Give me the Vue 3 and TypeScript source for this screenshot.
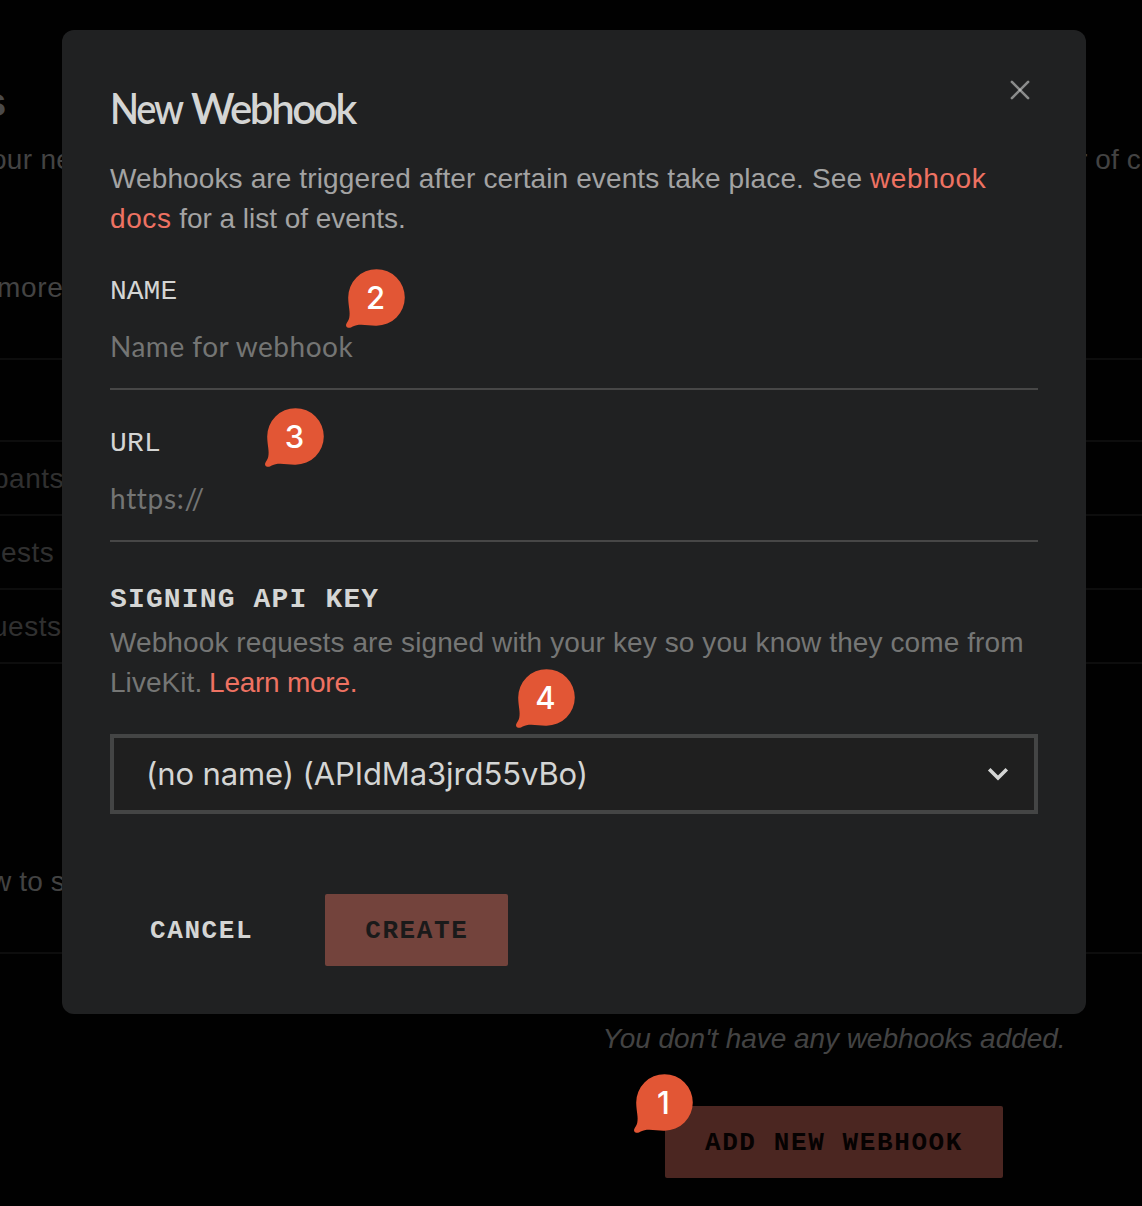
<script setup lang="ts">
interface Marker {
  label: number
  x: number
  y: number
}

const markers: Marker[] = [
  { label: 1, x: 634, y: 1074 },
  { label: 2, x: 346, y: 269 },
  { label: 3, x: 265, y: 408 },
  { label: 4, x: 516, y: 669 },
]

const bubblePath =
  'M30.5 0.2A28.3 28.3 0 0 1 58.8 28.5A28.3 28.3 0 0 1 30.5 56.7C24 56.9 16 54.8 10.5 56.3C8 57 6.6 57.6 5 58.4C1.8 59.8 -0.8 57.6 0.3 55C1.2 53 2.6 51.5 3.2 49C4.6 43 2.3 38 2.2 28.5A28.3 28.3 0 0 1 30.5 0.2Z'
</script>

<template>
  <div class="page">
    <div class="backdrop">
      <header class="intro">
        <h1 class="heading">s</h1>
        <div class="lead"><span class="our">our ne</span><span class="of">r of c</span></div>
        <div class="more">more</div>
      </header>
      <div class="row tall"></div>
      <div class="row"><span class="pants">pants</span></div>
      <div class="row"><span class="ests">ests</span></div>
      <div class="row"><span class="uests">uests</span></div>
      <div class="hooks-head"><span>w to s</span></div>
      <footer class="empty">
        <p class="none">You don't have any webhooks added.</p>
        <button class="btn add">ADD NEW WEBHOOK</button>
      </footer>
    </div>

    <section class="modal">
      <button class="close" aria-label="Close">
        <svg width="24" height="24" viewBox="0 0 24 24" fill="none" stroke="#d0d2d1" stroke-width="2.6" stroke-linecap="round">
          <path d="M3.9 3.9L20.1 20.1" stroke-opacity="0.6" />
          <path d="M20.1 3.9L3.9 20.1" stroke-opacity="0.6" />
        </svg>
      </button>
      <h2 class="title"><span class="first">New</span> <span class="second">Webhook</span></h2>
      <p class="desc">
        Webhooks are triggered after certain events take place. See <a>webhook<br />docs</a><span class="tail"> for a list of events.</span>
      </p>
      <div class="field">
        <label>NAME</label>
        <div class="input">Name for webhook</div>
      </div>
      <div class="field">
        <label class="url">URL</label>
        <div class="input scheme">https://</div>
      </div>
      <h3 class="sub">SIGNING API KEY</h3>
      <p class="desc muted">
        Webhook requests are signed with your key so you know they come from<br /><span class="tail">LiveKit. <a>Learn more.</a></span>
      </p>
      <div class="select">
        <span>(no name) (APIdMa3jrd55vBo)</span>
        <svg width="24" height="16" viewBox="0 0 24 16" fill="none" stroke="#d4d5d4" stroke-width="3.6">
          <path d="M3.2 3.3L12 12L20.8 3.3" />
        </svg>
      </div>
      <div class="actions">
        <button class="btn cancel">CANCEL</button>
        <button class="btn create">CREATE</button>
      </div>
    </section>

    <div v-for="m in markers" :key="m.label" class="marker" :style="{ left: m.x + 'px', top: m.y + 'px' }">
      <svg width="60" height="60" viewBox="0 0 60 60"><path :d="bubblePath" fill="#e25635" /></svg>
      <span>{{ m.label }}</span>
    </div>
  </div>
</template>

<style>
body {
  margin: 0;
  background: #010101;
}
</style>

<style scoped>
* {
  box-sizing: border-box;
}
h1,
h2,
h3,
p {
  margin: 0;
}
.page {
  position: relative;
  width: 1142px;
  height: 1206px;
  overflow: hidden;
  background: #010101;
  font: 400 28px/40px 'Liberation Sans', sans-serif;
  letter-spacing: 0.12px;
}
.backdrop {
  display: flex;
  flex-direction: column;
  color: #434343;
  white-space: nowrap;
}
.intro {
  height: 360px;
  padding-top: 76px;
  border-bottom: 2px solid #0d0d0d;
}
.heading {
  height: 64px;
  margin-left: -16px;
  font: 700 40px/52px 'Liberation Sans', sans-serif;
  color: #4a4a4a;
}
.lead {
  display: flex;
  justify-content: space-between;
}
.our {
  margin-left: -9px;
  letter-spacing: 0.3px;
}
.of {
  width: 64px;
}
.more {
  margin: 88px 0 0 -3px;
  letter-spacing: 0.7px;
}
.row {
  height: 74px;
  padding-top: 17px;
  border-bottom: 2px solid #0d0d0d;
  color: #303030;
  letter-spacing: 0.5px;
}
.tall {
  height: 82px;
}
.pants {
  margin-left: -7px;
}
.ests {
  margin-left: 1px;
}
.uests {
  margin-left: -8px;
}
.hooks-head {
  height: 290px;
  padding-top: 198px;
  border-bottom: 2px solid #0d0d0d;
}
.hooks-head span {
  margin-left: -9px;
}
.empty {
  display: flex;
  flex-direction: column;
  align-items: center;
  padding: 65px 0 0 526px;
}
.none {
  font-style: italic;
  letter-spacing: -0.05px;
}
.btn {
  height: 72px;
  padding: 2px 40px 0;
  border: 0;
  border-radius: 2px;
  font: 700 26px/70px 'Liberation Mono', monospace;
  letter-spacing: 1.6px;
  white-space: nowrap;
}
.add {
  margin-top: 47px;
  background: #4b2621;
  color: #060202;
}
.modal {
  position: absolute;
  left: 62px;
  top: 30px;
  width: 1024px;
  height: 984px;
  padding: 48px;
  border-radius: 12px;
  background: #202122;
  color: #d4d5d4;
  white-space: nowrap;
}
.close {
  position: absolute;
  top: 48px;
  right: 54px;
  width: 24px;
  height: 24px;
  padding: 0;
  border: 0;
  background: none;
}
.close svg {
  display: block;
}
.title {
  display: flex;
  height: 81px;
  font: 600 43px/60px Lato, sans-serif;
  letter-spacing: -2.4px;
}
.title span {
  display: block;
  transform-origin: 0 50%;
}
.title .first {
  width: 81px;
  transform: scaleX(0.88);
}
.title .second {
  transform: scaleX(0.975);
}
.desc {
  color: #a3a3a3;
}
.desc a {
  color: #ee7262;
  letter-spacing: 0.6px;
}
.tail {
  letter-spacing: -0.04px;
}
.field {
  height: 152px;
  padding-top: 33px;
  border-bottom: 2px solid #474747;
}
.title + .desc + .field {
  height: 151px;
  padding-top: 32px;
}
.field label {
  display: block;
  height: 40px;
  padding-top: 1px;
  font: 400 28px/40px 'Liberation Mono', monospace;
  letter-spacing: 0;
}
.field .url {
  letter-spacing: 0.2px;
}
.input {
  padding-top: 15px;
  font: 400 28px/40px Lato, sans-serif;
  letter-spacing: 0.5px;
  color: #747574;
}
.scheme {
  letter-spacing: 0.7px;
}
.sub {
  height: 81px;
  padding-top: 38px;
  font: 700 28px/40px 'Liberation Mono', monospace;
  letter-spacing: 1.15px;
}
.muted {
  color: #757675;
  letter-spacing: 0.1px;
}
.muted .tail {
  letter-spacing: 0.05px;
}
.muted a {
  margin-left: -1px;
  letter-spacing: -0.25px;
}
.select {
  display: flex;
  align-items: center;
  justify-content: space-between;
  height: 80px;
  margin-top: 31px;
  padding: 0 24px 0 32px;
  border: 4px solid #444545;
  background: #1f1f1f;
  font: 400 31px/40px Inter, sans-serif;
  letter-spacing: -0.1px;
}
.select span {
  padding-bottom: 1px;
}
.actions {
  display: flex;
  gap: 32px;
  margin-top: 80px;
}
.cancel {
  background: none;
  color: #d4d5d4;
}
.create {
  background: #73433c;
  color: #1a1a1a;
}
.marker {
  position: absolute;
  width: 59px;
  height: 59px;
}
.marker svg {
  display: block;
  overflow: visible;
}
.marker span {
  position: absolute;
  left: 0;
  top: 8px;
  width: 59px;
  text-align: center;
  font: 500 31px/41px Inter, sans-serif;
  letter-spacing: 0;
  color: #fff;
}
</style>
